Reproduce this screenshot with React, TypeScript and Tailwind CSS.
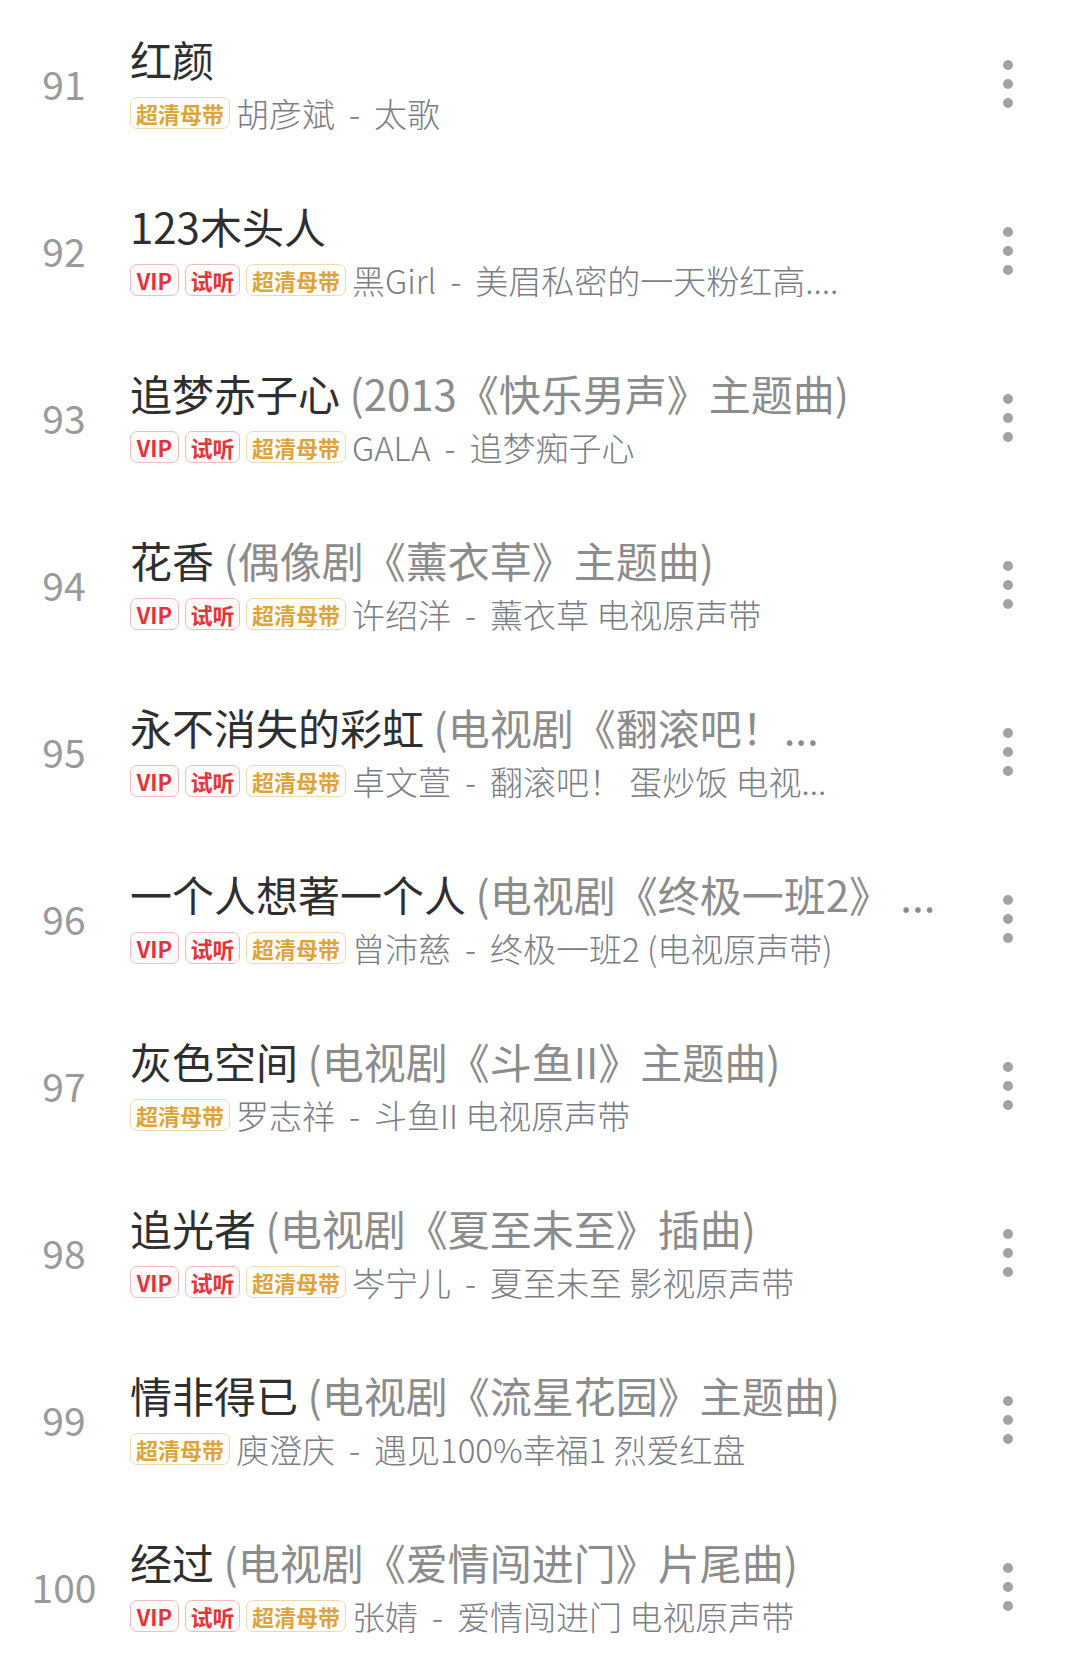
import React from 'react';

type Tag = 'vip' | 'try' | 'hq';

interface Song {
  no: number;
  title: string;
  extra?: string;
  tags: Tag[];
  artist: string;
  album: string;
}

const ALL: Tag[] = ['vip', 'try', 'hq'];

const songs: Song[] = [
  { no: 91, title: '红颜', tags: ['hq'], artist: '胡彦斌', album: '太歌' },
  { no: 92, title: '123木头人', tags: ALL, artist: '黑Girl', album: '美眉私密的一天粉红高....' },
  { no: 93, title: '追梦赤子心', extra: '(2013《快乐男声》主题曲)', tags: ALL, artist: 'GALA', album: '追梦痴子心' },
  { no: 94, title: '花香', extra: '(偶像剧《薰衣草》主题曲)', tags: ALL, artist: '许绍洋', album: '薰衣草 电视原声带' },
  { no: 95, title: '永不消失的彩虹', extra: '(电视剧《翻滚吧！...', tags: ALL, artist: '卓文萱', album: '翻滚吧！ 蛋炒饭 电视...' },
  { no: 96, title: '一个人想著一个人', extra: '(电视剧《终极一班2》 ...', tags: ALL, artist: '曾沛慈', album: '终极一班2 (电视原声带)' },
  { no: 97, title: '灰色空间', extra: '(电视剧《斗鱼II》主题曲)', tags: ['hq'], artist: '罗志祥', album: '斗鱼II 电视原声带' },
  { no: 98, title: '追光者', extra: '(电视剧《夏至未至》插曲)', tags: ALL, artist: '岑宁儿', album: '夏至未至 影视原声带' },
  { no: 99, title: '情非得已', extra: '(电视剧《流星花园》主题曲)', tags: ['hq'], artist: '庾澄庆', album: '遇见100%幸福1 烈爱红盘' },
  { no: 100, title: '经过', extra: '(电视剧《爱情闯进门》片尾曲)', tags: ALL, artist: '张婧', album: '爱情闯进门 电视原声带' },
];

function Badge({ tag }: { tag: Tag }) {
  if (tag === 'hq') {
    return (
      <span className="flex h-[32px] w-[100px] items-center justify-center rounded-[7px] border-[1.5px] border-[#eddab2] bg-[#fffdf8] text-[22px] font-semibold leading-none text-[#dca43a]">
        超清母带
      </span>
    );
  }
  return (
    <span
      className={
        tag === 'vip'
          ? 'flex h-[32px] w-[49px] items-center justify-center rounded-[7px] border-[1.5px] border-[#f2bcbf] bg-[#fffafa] text-[22px] font-semibold leading-none text-[#e0363b]'
          : 'flex h-[32px] w-[55px] items-center justify-center rounded-[7px] border-[1.5px] border-[#f2bcbf] bg-[#fffafa] text-[22px] font-semibold leading-none text-[#e0363b]'
      }
    >
      {tag === 'vip' ? 'VIP' : '试听'}
    </span>
  );
}

function SongRow({ song }: { song: Song }) {
  return (
    <div className="flex h-[167px] items-center">
      <div className="w-[128px] text-center text-[39px] leading-none text-[#9a9a9a]">{song.no}</div>
      <div className="ml-[2px] flex min-w-0 flex-1 flex-col gap-[6px]">
        <div className="whitespace-nowrap text-[42px] leading-[52px] text-[#2f2f2f]">
          {song.title}
          {song.extra && <span className="text-[#8c8c8c]"> {song.extra}</span>}
        </div>
        <div className="flex items-center gap-[6px]">
          {song.tags.map((t) => (
            <Badge key={t} tag={t} />
          ))}
          <span className="whitespace-nowrap text-[33px] font-light leading-[44px] text-[#7b7d84]">
            {song.artist}
            <span className="px-[14px]">-</span>
            {song.album}
          </span>
        </div>
      </div>
      <div className="flex w-[144px] flex-col items-center gap-[9px]">
        <span className="h-[10px] w-[10px] rounded-full bg-[#a3a3a3]" />
        <span className="h-[10px] w-[10px] rounded-full bg-[#a3a3a3]" />
        <span className="h-[10px] w-[10px] rounded-full bg-[#a3a3a3]" />
      </div>
    </div>
  );
}

export default function App() {
  return (
    <div className="h-[1665px] w-[1080px] overflow-hidden bg-white font-['Noto_Sans_CJK_SC',sans-serif]">
      {songs.map((s) => (
        <SongRow key={s.no} song={s} />
      ))}
    </div>
  );
}
